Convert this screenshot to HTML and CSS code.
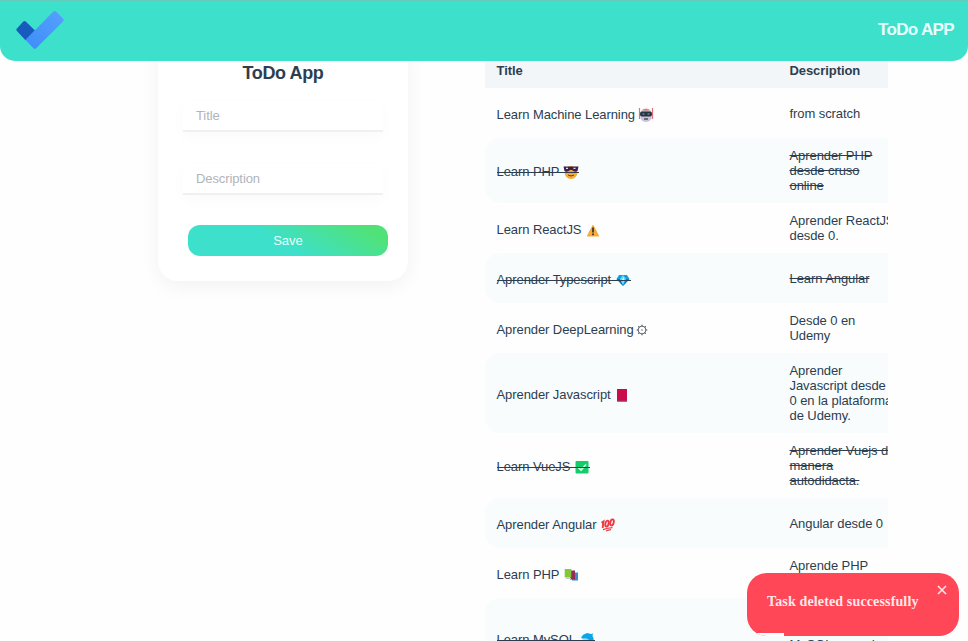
FILE: index.html
```
<!DOCTYPE html>
<html lang="es">
<head>
<meta charset="utf-8">
<title>ToDo App</title>
<link rel="stylesheet" href="styles.css">
</head>
<body>
<header class="navbar">
  <svg class="logo" width="50" height="40" viewBox="0 0 50 40">
    <defs><linearGradient id="tick" x1="0" y1="1" x2="1" y2="0"><stop offset="0" stop-color="#3d8cf8"/><stop offset="1" stop-color="#57a0ff"/></linearGradient></defs>
    <path d="M10.5 29.2L1.7 19.8Q.7 18.8 1.7 17.8L8.3 10.5Q9.5 9.4 10.7 10.5L20 19.5Z" fill="#185abd"/>
    <path d="M10.5 28.8L38.2 .8Q39.7-.6 41.2 .8L48 7.6Q49.4 9 48 10.4L21.2 37.2Q19.8 38.6 18.4 37.2Z" fill="url(#tick)"/>
  </svg>
  <div class="brand">ToDo APP</div>
</header>
<main class="content">
  <form class="card">
    <h1>ToDo App</h1>
    <input type="text" placeholder="Title">
    <input type="text" placeholder="Description">
    <button type="button">Save</button>
  </form>
  <section class="tasks">
    <div class="row head"><div>Title</div><div>Description</div></div>
    <div class="row"><div><span class="name">Learn Machine Learning
      <svg class="emoji" viewBox="0 0 16 16"><path d="M1.5 1v11M14.5 1v11" stroke="#e5707b" stroke-width="1.2"/><path d="M2 8Q2 2 8 2T14 8Q14 15 8 15T2 8" fill="#c9c2d8"/><path d="M4 3Q8 0 12 3L8 4Z" fill="#d48b82"/><rect x="2" y="4.5" width="12" height="5" rx="2" fill="#263640"/><path d="M4.5 7h2M9.5 7h2" stroke="#7fb0ba" stroke-width="1.2"/><path d="M6 12h4" stroke="#34303d" stroke-width="1.2"/></svg></span></div><div>from scratch</div></div>
    <div class="row even done"><div><span class="name">Learn PHP
      <svg class="emoji" viewBox="0 0 16 16"><circle cx="8" cy="8.5" r="6.5" fill="#f5ac35"/><path d="M.5 2.5H15.5L14.5 7Q12 9 9 6H7Q4 9 1.5 7Z" fill="#402047"/><path d="M3 4.3h2M10.5 4.3h2" stroke="#e9dbe6" stroke-width="1.3"/><path d="M5 11Q8 13 11 11" fill="none" stroke="#703527"/></svg></span></div><div>Aprender PHP<br>desde cruso<br>online</div></div>
    <div class="row"><div><span class="name">Learn ReactJS
      <svg class="emoji" viewBox="0 0 16 16"><path d="M8 3.5L13.5 14H2.5Z" fill="#f5ad3b" stroke="#f5ad3b" stroke-width="1.2" stroke-linejoin="round"/><path d="M8 5.5v5M8 11.5v1.8" stroke="#30262b" stroke-width="1.6"/></svg></span></div><div>Aprender ReactJS<br>desde 0.</div></div>
    <div class="row even done"><div><span class="name">Aprender Typescript
      <svg class="emoji" viewBox="0 0 16 16"><path d="M4 3H12L14.5 7L8 14L1.5 7Z" fill="#169cdf"/><path d="M1.5 7H5L8 14Z" fill="#0870b5"/><path d="M5 7L8 3L11 7L8 13Z" fill="#61dcf5"/><path d="M11 7H14.5L8 14Z" fill="#087fc7"/><path d="M7 8L9 5V10Z" fill="#d6faff"/></svg></span></div><div>Learn Angular</div></div>
    <div class="row"><div><span class="name">Aprender DeepLearning
      <svg class="gear" viewBox="0 0 12 12"><circle cx="6" cy="6" r="3.9" fill="none" stroke="#46505a" stroke-width=".9"/><circle cx="6" cy="6" r=".7" fill="#46505a"/><path d="M6 .7v1.5M6 9.8v1.5M.7 6h1.5M9.8 6h1.5M2.2 2.2l1.1 1.1M8.7 8.7l1.1 1.1M9.8 2.2l-1.1 1.1M3.3 8.7l-1.1 1.1" stroke="#46505a" stroke-width="1"/></svg></span></div><div>Desde 0 en<br>Udemy</div></div>
    <div class="row even"><div><span class="name">Aprender Javascript
      <svg class="emoji" viewBox="0 0 16 16"><path d="M3 2H13V14.5H3Z" fill="#c80c4c"/><path d="M3.5 14H13" stroke="#9a3c66"/></svg></span></div><div>Aprender<br>Javascript desde<br>0 en la plataforma<br>de Udemy.</div></div>
    <div class="row done"><div><span class="name">Learn VueJS
      <svg class="emoji" viewBox="0 0 16 16"><rect x="1.5" y="2" width="13" height="12.5" rx="1" fill="#13cd6b"/><path d="M4.3 8.5L7 11L12 5.5" fill="none" stroke="#e6fff1" stroke-width="1.6"/></svg></span></div><div>Aprender Vuejs de<br>manera<br>autodidacta.</div></div>
    <div class="row even"><div><span class="name">Aprender Angular
      <svg class="emoji" viewBox="0 0 16 16"><g fill="none" stroke="#ee3940" stroke-width="1.9"><path d="M1.5 5.8L3.5 4.5L2.6 11"/><ellipse cx="7" cy="6.6" rx="1.6" ry="3" transform="rotate(14 7 6.6)"/><ellipse cx="12" cy="5.4" rx="1.7" ry="3.1" transform="rotate(14 12 5.4)"/><path d="M3 12.6Q8 11 12.5 10.7M6 14Q8 13 11 12.6" stroke-width="1.2"/></g></svg></span></div><div>Angular desde 0</div></div>
    <div class="row"><div><span class="name">Learn PHP
      <svg class="emoji" viewBox="0 0 16 16"><path d="M9 5.5H15V13.5H9Z" fill="#368dd0"/><path d="M7 3.5H12V12.5H7Z" fill="#942c55"/><path d="M1.7 2H8.3V10.5H1.7Z" fill="#82c83b"/><path d="M3 11H8V12H3ZM9 14H14" fill="#c4cbc5"/></svg></span></div><div>Aprende PHP<br>desde 0</div></div>
    <div class="row even done last"><div><span class="name">Learn MySQL
      <svg class="emoji" viewBox="0 0 16 16"><path d="M2 6Q4 2 6 2L8 1L12 2L14 1.5L13.5 4Q16 8 13 13L10 15L11 10Q9 6 5 7Z" fill="#0ba6e9"/><path d="M3 7Q8 5 11 9L8 10Z" fill="#98dff8"/></svg></span></div><div class="plain">Aprender<br>bases de datos<br>MySQL creand<br>tablas</div></div>
  </section>
</main>
<aside class="toast">
  <p>Task deleted successfully</p>
  <svg class="close" viewBox="0 0 10 10"><path d="M1 1L9 9M9 1L1 9" stroke="#ffe7e9" stroke-width="1.6"/></svg>
  <div class="progress"></div>
</aside>
</body>
</html>
```

FILE: styles.css
```
* { box-sizing: border-box; }
html, body { height: 100%; overflow: hidden; }
body {
  margin: 0;
  background: #fefefe;
  color: #2c3e50;
  font: 13px/15px "Liberation Sans", Arial, sans-serif;
}
.navbar {
  position: relative;
  z-index: 2;
  display: flex;
  justify-content: space-between;
  height: 61px;
  padding: 10px 14px 0 15px;
  border-top: 1px solid #65cbbd;
  border-radius: 0 0 15px 15px;
  background: #3de0cb;
}
.brand {
  padding-top: 9px;
  color: #e8fffb;
  font-size: 17px;
  font-weight: 700;
  line-height: 20px;
  letter-spacing: -.65px;
}
.content {
  display: flex;
  align-items: flex-start;
  height: 580px;
  padding-left: 158px;
}
.card {
  flex: none;
  display: flex;
  flex-direction: column;
  width: 250px;
  height: 240px;
  margin-top: -20px;
  padding: 21px 25px 0;
  border-radius: 20px;
  background: #fff;
  box-shadow: 0 5px 20px rgba(0, 0, 0, .05);
}
h1 {
  margin: 0 0 17px;
  font-size: 18px;
  line-height: 22px;
  letter-spacing: -.4px;
  text-align: center;
}
.card input {
  width: 200px;
  height: 31px;
  margin: 0 0 32px;
  padding: 0 13px;
  border: 0;
  border-bottom: 2px solid #f0f0f0;
  background: #fff;
  box-shadow: 0 5px 15px rgba(0, 0, 0, .025);
  font: inherit;
  letter-spacing: -.1px;
}
.card input::placeholder { color: #b0b4b9; opacity: 1; }
.card button {
  width: 200px;
  height: 31px;
  margin: -2px 0 0 5px;
  padding: 0;
  border: 0;
  border-radius: 12px;
  background: linear-gradient(30deg, #3de0cb 45%, #50e276 90%);
  color: #ebfff9;
  font: inherit;
}
.tasks {
  flex: none;
  width: 403px;
  height: 100%;
  margin-left: 77px;
  overflow: hidden;
  letter-spacing: -.08px;
}
.row {
  display: grid;
  grid-template-columns: 293px 130px;
  align-items: center;
  width: 423px;
  min-height: 50px;
  padding: 10px 0 10px 11.5px;
  white-space: nowrap;
}
.even { border-radius: 15px 0 0 15px; background: #f8fcfd; }
.head {
  min-height: 27px;
  padding: 2px 0 10px 11.5px;
  background: #f2f6f8;
  font-weight: 700;
}
.name { position: relative; top: 1px; display: inline-block; }
.head > div { margin-top: -1px; }
.done > div:last-child { text-decoration: line-through; }
.done > .plain:last-child { text-decoration: none; }
.done .name::after {
  content: "";
  position: absolute;
  top: 8px;
  left: 0;
  right: 0;
  height: 1px;
  background: #2c3e50;
}
.emoji {
  width: 16px;
  height: 16px;
  margin: -1px 0 -4px;
}
.gear { width: 12px; height: 12px; margin: -1px 0 -2px -1px; }
.last { height: 80px; padding: 9px 0 11px 11.5px; }
.last .name { top: 2px; }
.toast {
  position: absolute;
  z-index: 3;
  left: 747px;
  top: 573px;
  display: flex;
  justify-content: space-between;
  width: 212px;
  height: 63px;
  padding: 12px 12px 0 20px;
  overflow: hidden;
  border-radius: 20px;
  background: #ff4757;
  color: #ffe7e9;
}
.toast p {
  margin: 8px 0 0;
  font: 700 14px/17px "Liberation Serif", serif;
  letter-spacing: .14px;
  white-space: nowrap;
}
.close { width: 10px; height: 10px; }
.progress {
  position: absolute;
  left: 0;
  bottom: 0;
  width: 37px;
  height: 3px;
  background: #fff;
}
```
